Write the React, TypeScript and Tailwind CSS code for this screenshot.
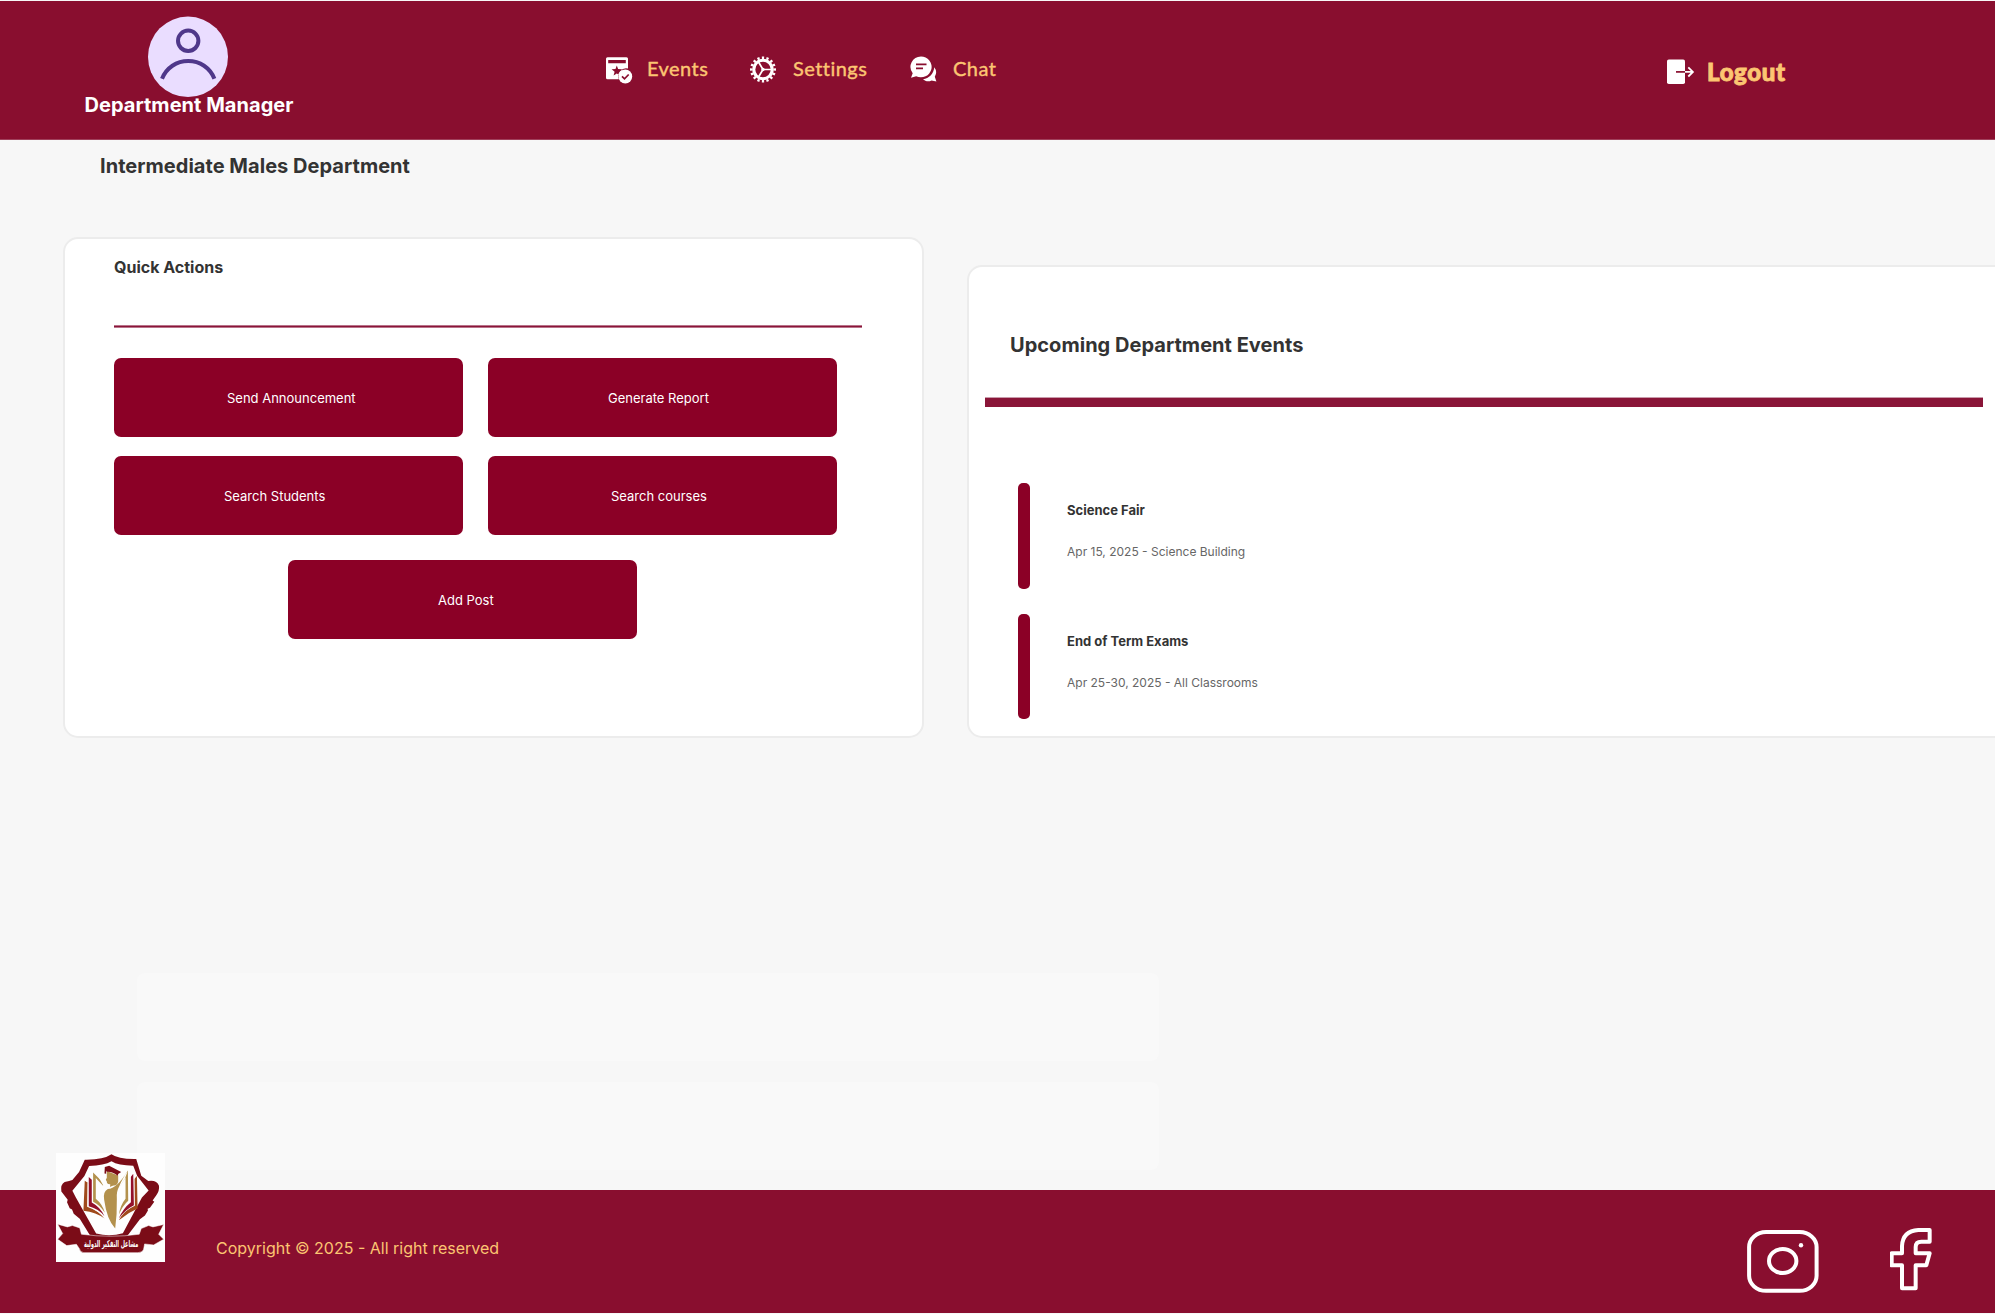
import React from "react";

function Avatar() {
  return (
    <svg className="block h-[81px] w-[80px] shrink-0" viewBox="0 0 80 81" fill="none">
      <ellipse cx="40" cy="40.8" rx="40" ry="40.2" fill="#eaddff" />
      <circle cx="40.2" cy="24.8" r="10.2" stroke="#4f378a" strokeWidth="4" />
      <path d="M14 62.700C18.500 51.700 28.500 45 40.200 45S62 51.700 66.400 62.700" stroke="#4f378a" strokeWidth="4" />
    </svg>
  );
}

function EventsIcon() {
  return (
    <svg className="mt-[2px] block h-[27px] w-[27px] shrink-0" viewBox="0 0 27 27">
      <path
        fill="#fff"
        fillRule="evenodd"
        d="M1.500 0.300h19A1.500 1.500 0 0 1 22 1.800V11.600a8 8 0 0 0-9.200 10.700H1.500A1.500 1.500 0 0 1 0 20.800V1.800A1.500 1.500 0 0 1 1.500 0.300ZM2.200 3v3.300h17.600V3ZM10.800 8.600l-1.300 3.500-3.900.2 3 2.400-1 3.800 3.200-2.100 2 1.300L16 13.500 15.700 12.200 12.100 12.100Z"
      />
      <circle cx="19.300" cy="19.500" r="6.900" fill="#fff" />
      <path d="M16 19.400l2.500 2.500 4.200-4.400" fill="none" stroke="#890e2f" strokeWidth="1.700" />
    </svg>
  );
}

function SettingsIcon() {
  return (
    <svg className="block h-[27px] w-[27px] shrink-0" viewBox="0 0 27 27" fill="none" stroke="#fff">
      <circle cx="13" cy="13.500" r="11.700" strokeWidth="2.600" pathLength="64" strokeDasharray="2 2" strokeDashoffset="1" />
      <circle cx="13" cy="13.500" r="9.200" strokeWidth="3" />
      <path d="M13 13.500H21.500M13 13.500L8.500 6M13 13.500L8.500 21" strokeWidth="1.700" />
      <circle cx="13" cy="13.500" r="1.700" fill="#fff" stroke="none" />
    </svg>
  );
}

function ChatIcon() {
  return (
    <svg className="block h-[27px] w-[27px] shrink-0" viewBox="0 0 27 27">
      <path fill="#fff" d="M11 0.500a10.800 10.400 0 1 1-4.800 19.800L1 21.800l1.700-4.600A10.600 10.400 0 0 1 11 .5Z" />
      <path fill="#fff" d="M24.300 11.300a8.500 8.500 0 0 1 .5 9.500l1.600 4.700-4.800-1.100c-3.200 1.500-6.300.9-8.600-1.200 6-.6 10.700-5.400 11.300-11.900Z" />
      <path d="M6 8.300h10.500M6 12.400h7" stroke="#890e2f" strokeWidth="1.800" />
    </svg>
  );
}

function LogoutIcon() {
  return (
    <svg className="block h-[26px] w-[28px] shrink-0" viewBox="0 0 28 26" fill="none">
      <rect x="0" y="0.500" width="18" height="24.500" rx="1.800" fill="#fff" />
      <path d="M9 12.900h9" stroke="#890e2f" strokeWidth="1.700" />
      <path d="M18 12.900h7.500M21.300 8.300l4.600 4.600-4.600 4.600" stroke="#fff" strokeWidth="1.800" />
    </svg>
  );
}

function SchoolLogo() {
  return (
    <svg className="block h-[109px] w-[109px] shrink-0 overflow-visible" viewBox="19 23 326 326">
      <rect x="19" y="23" width="326" height="326" fill="#fefefe" />
      <path
        fill="#7b0c17"
        fillRule="evenodd"
        d="M185 27Q205 42 259 41L274 91L295 107Q320 103 327 121Q329 136 319 149L308 165L313 169L300 187L293 190L294 195L285 210L270 221L227 278H126L90 220L72 205L67 192L60 188L52 170L54 163L35 138Q32 117 45 110Q60 107 68 104L88 80L105 43Q160 44 185 27ZM185 48Q163 61 118 62L104 92L68 136L78 155L139 264Q180 275 219 263L276 156L296 135L262 92L250 61Q205 61 185 48Z"
      />
      <path fill="#a04a1c" d="M105 106L115 113V183Q147 196 164 219Q140 201 101 196ZM261 92L252 102V180Q222 196 207 224Q235 201 263 189Z" />
      <path fill="#fefefe" d="M113 111L120 118V179Q148 190 162 208L164 219Q147 196 112 184ZM254 92L250 104V178Q224 192 209 215Q225 195 255 181Z" />
      <path fill="#93102a" d="M117 95L126 103V171Q152 185 164 212Q148 190 117 182ZM250 85L243 94V170Q220 188 207 218Q227 192 252 179Z" />
      <path fill="#b3914d" d="M130 81L166 117L159 120L138 98V160Q158 176 165 202Q151 179 130 169ZM234 75L205 119L211 121L227 96V160Q212 178 207 207Q219 180 235 166Z" />
      <path fill="#fefefe" d="M137 79L185 125L233 78L225 100L207 130L166 130Z" />
      <path fill="#b3914d" d="M171 77L205 90V108Q203 118 194 120Q187 119 181 125V116Q171 117 171 108L168 103L171 97ZM233 77Q214 107 208 123Q199 138 201 160Q202 205 196 249Q171 222 163 163Q159 139 174 131Q201 130 233 77Z" />
      <path fill="#7b0c17" d="M165 65L178 61L214 80L205 86L204 91Q188 78 171 79L169 76V85L164 84Z" />
      <path
        fill="#7b0c17"
        stroke="#fefefe"
        strokeWidth="1.500"
        d="M24 236L53 244L68 240L90 247L95 266Q182 278 268 266L274 249L296 240L309 244L341 237L326 266L341 281L311 298L284 295L281 311Q278 321 264 321H102Q91 320 89 309L80 296L51 300L24 281L39 264Z"
      />
      <text
        x="184"
        y="303"
        textAnchor="middle"
        textLength="162"
        lengthAdjust="spacingAndGlyphs"
        fill="#fefefe"
        className="font-['DejaVu_Sans',sans-serif] text-[29px] font-bold"
      >
        مشاعل التفكير الدولية
      </text>
    </svg>
  );
}

function InstagramIcon() {
  return (
    <svg className="block h-[63px] w-[72px] shrink-0" viewBox="0 0 72 63" fill="none" stroke="#fff">
      <rect x="2.100" y="2" width="67.500" height="58.800" rx="17" ry="15" strokeWidth="4" />
      <ellipse cx="35.700" cy="31" rx="13.700" ry="12" strokeWidth="4" />
      <circle cx="54" cy="15.200" r="2.200" fill="#fff" stroke="none" />
    </svg>
  );
}

function FacebookIcon() {
  return (
    <svg className="block h-[63px] w-[42px] shrink-0" viewBox="510 146 126 189" fill="none">
      <path
        d="M629 152V187H604Q587 187 587 203V222H629L619 258H587V327H546V258H515V222H546V200Q548 155 595 152Z"
        stroke="#fff"
        strokeWidth="12"
        strokeLinejoin="round"
      />
    </svg>
  );
}

const buttonClass = "flex h-[79px] w-[349px] shrink-0 items-center rounded-[7px] bg-[#8b0026] text-[13px] leading-5 text-white";

function EventRow({ title, detail, className }: { title: string; detail: string; className: string }) {
  return (
    <div className={className}>
      <div className="w-3 shrink-0 rounded-[5px] bg-[#8b0026]" />
      <div className="ml-[37px] pt-[17px] whitespace-nowrap">
        <h3 className="text-[13px] leading-5 font-bold text-[#333]">{title}</h3>
        <p className="mt-[22px] text-[12px] leading-5 text-[#666]">{detail}</p>
      </div>
    </div>
  );
}

export default function App() {
  return (
    <div className="flex h-[1314px] w-[1995px] flex-col overflow-hidden border-t border-[#f7f7f7] bg-[#f7f7f7] font-['Inter',sans-serif]">
      <header className="flex h-[139px] shrink-0 border-b border-[#a0405b] bg-[#890e2f]">
        <div className="flex w-[376px] shrink-0 flex-col items-center pt-[15px]">
          <Avatar />
          <div className="-mt-[4px] ml-[2px] text-[20px] leading-6 font-bold tracking-[0.03px] whitespace-nowrap text-white">Department Manager</div>
        </div>
        <nav className="mt-[55px] ml-[230px] flex h-[27px] items-center font-['Lato',sans-serif] text-[20px] leading-[27px] whitespace-nowrap text-[#fcc572]">
          <EventsIcon />
          <span className="-mt-[3px] ml-[14px] w-[103px] tracking-[0.45px] [-webkit-text-stroke:0.4px_#fcc572]">Events</span>
          <SettingsIcon />
          <span className="-mt-[3px] ml-[16px] w-[117px] tracking-[0.45px] [-webkit-text-stroke:0.4px_#fcc572]">Settings</span>
          <ChatIcon />
          <span className="-mt-[3px] ml-[16px] tracking-[0.45px] [-webkit-text-stroke:0.4px_#fcc572]">Chat</span>
        </nav>
        <div className="mt-[58px] mr-[208px] ml-auto flex h-[26px] items-center">
          <LogoutIcon />
          <span className="ml-[12px] w-[80px] font-['Lato',sans-serif] text-[24px] font-black tracking-[0.65px] text-[#fcc572] [-webkit-text-stroke:0.9px_#fcc572]">Logout</span>
        </div>
      </header>

      <main className="flex h-[1050px] shrink-0 flex-col">
        <h1 className="mt-[14px] ml-[100px] h-6 text-[20px] leading-6 font-bold tracking-[0.03px] text-[#333]">Intermediate Males Department</h1>

        <div className="mt-[59px] ml-[63px] flex h-[501px] shrink-0 items-end">
          <section className="h-[501px] w-[861px] shrink-0 rounded-[15px] border-2 border-[#ececec] bg-white pt-4 pl-[49px]">
            <h2 className="text-[16px] leading-6 font-bold text-[#333]">Quick Actions</h2>
            <div className="mt-[46px] h-[3px] w-[748px] border-y border-[#b9738a] bg-[#8a1538]" />
            <div className="mt-[30px] grid w-[723px] grid-cols-[349px_349px] gap-x-[25px] gap-y-[19px]">
              <button className={buttonClass + " pl-[113px]"}>Send Announcement</button>
              <button className={buttonClass + " pl-[120px]"}>Generate Report</button>
              <button className={buttonClass + " pl-[110px]"}>Search Students</button>
              <button className={buttonClass + " pl-[123px]"}>Search courses</button>
            </div>
            <button className={buttonClass + " mt-[25px] ml-[174px] pl-[150px]"}>Add Post</button>
          </section>

          <section className="ml-[43px] h-[473px] w-[1100px] shrink-0 rounded-[15px] border-2 border-[#ececec] bg-white pt-[66px] pl-4">
            <h2 className="ml-[25px] text-[20px] leading-6 font-bold tracking-[0.03px] text-[#333]">Upcoming Department Events</h2>
            <div className="mt-[40px] h-[10px] w-[998px] border-t border-[#c99bab] bg-[#8a1538]" />
            <EventRow title="Science Fair" detail="Apr 15, 2025 - Science Building" className="mt-[76px] ml-[33px] flex h-[106px]" />
            <EventRow title="End of Term Exams" detail="Apr 25-30, 2025 - All Classrooms" className="mt-[25px] ml-[33px] flex h-[105px]" />
          </section>
        </div>

        <div className="mt-[235px] ml-[137px] flex w-[1022px] flex-col gap-[21px]">
          <div className="h-[88px] rounded-lg bg-[#f9f9f9]" />
          <div className="h-[88px] rounded-lg bg-[#f9f9f9]" />
        </div>
      </main>

      <footer className="flex h-[123px] shrink-0 bg-[#890e2f]">
        <div className="relative -mt-[37px] ml-14 h-[109px] w-[109px] shrink-0">
          <SchoolLogo />
        </div>
        <p className="mt-[46px] ml-[51px] text-[16px] leading-6 whitespace-nowrap text-[#fcc572]">Copyright © 2025 - All right reserved</p>
        <div className="mt-[38px] mr-[63px] ml-auto flex items-start">
          <div className="mt-[2px]"><InstagramIcon /></div>
          <div className="ml-[71px]"><FacebookIcon /></div>
        </div>
      </footer>
    </div>
  );
}
